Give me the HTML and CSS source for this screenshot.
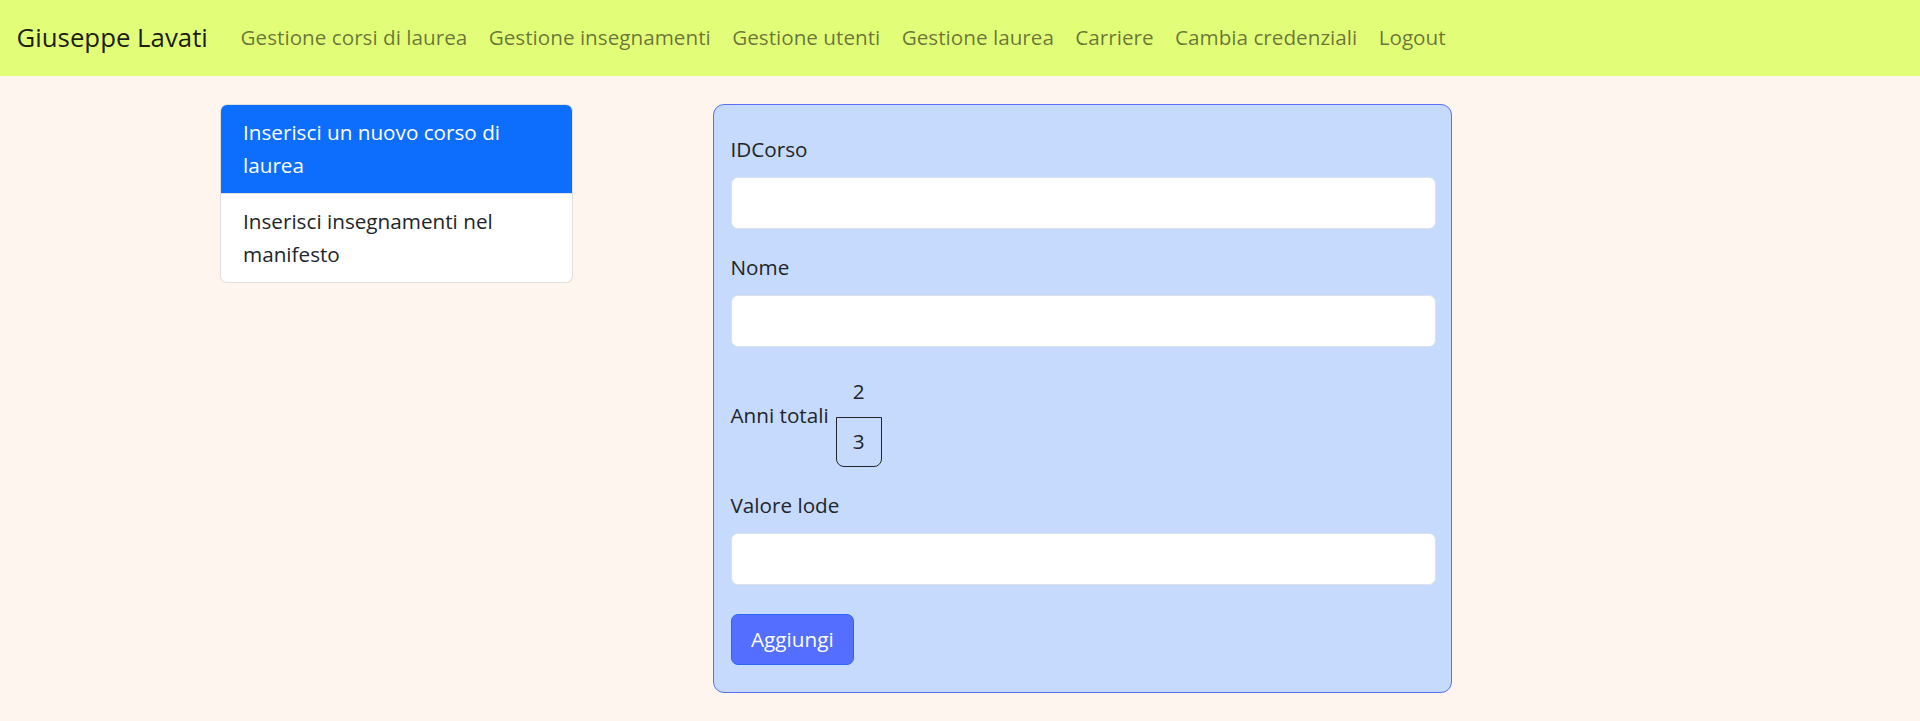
FILE: index.html
```html
<!DOCTYPE html>
<html lang="it">
<head>
<meta charset="utf-8">
<title>Gestione corsi di laurea</title>
<link rel="stylesheet" href="styles.css">
</head>
<body>
<nav class="navbar">
  <a class="brand" href="#">Giuseppe Lavati</a>
  <ul class="nav-links">
    <li><a class="nav-link" href="#">Gestione corsi di laurea</a></li>
    <li><a class="nav-link" href="#">Gestione insegnamenti</a></li>
    <li><a class="nav-link" href="#">Gestione utenti</a></li>
    <li><a class="nav-link" href="#">Gestione laurea</a></li>
    <li><a class="nav-link" href="#">Carriere</a></li>
    <li><a class="nav-link" href="#">Cambia credenziali</a></li>
    <li><a class="nav-link" href="#">Logout</a></li>
  </ul>
</nav>
<main class="page">
  <div class="list-group">
    <a class="list-item active" href="#">Inserisci un nuovo corso di laurea</a>
    <a class="list-item" href="#">Inserisci insegnamenti nel manifesto</a>
  </div>
  <form class="course-form">
    <div class="field">
      <label class="field-label" for="idcorso">IDCorso</label>
      <input class="control" id="idcorso" type="text">
    </div>
    <div class="field">
      <label class="field-label" for="nome">Nome</label>
      <input class="control" id="nome" type="text">
    </div>
    <div class="field field-inline">
      <label class="field-label inline-label">Anni totali</label>
      <div class="year-picker">
        <span class="year-option">2</span>
        <span class="year-box">3</span>
      </div>
    </div>
    <div class="field">
      <label class="field-label" for="lode">Valore lode</label>
      <input class="control" id="lode" type="text">
    </div>
    <button class="btn-primary" type="button">Aggiungi</button>
  </form>
</main>
</body>
</html>
```
FILE: styles.css
```css
* { box-sizing: border-box; }

html, body {
  margin: 0;
  padding: 0;
}

body {
  background: #fff5ef;
  font-family: "Open Sans", "Noto Sans", sans-serif;
  font-size: 20.7px;
  line-height: 33px;
  color: #212529;
  min-height: 721px;
}

a { text-decoration: none; }

/* Navbar */
.navbar {
  background: #e2fd77;
  display: flex;
  align-items: center;
  padding: 10px 16.5px;
  height: 75.5px;
}

.brand {
  font-size: 25.8px;
  line-height: 41px;
  color: rgba(0, 0, 0, 0.9);
  margin-right: 22px;
  white-space: nowrap;
}

.nav-links {
  display: flex;
  list-style: none;
  margin: 0;
  padding: 0;
}

.nav-link {
  display: block;
  padding: 11px 10.7px;
  color: rgba(0, 0, 0, 0.55);
  white-space: nowrap;
}

/* Page */
.page {
  display: flex;
  align-items: flex-start;
  padding: 28.5px 0 0 220px;
  gap: 140px;
}

.list-group {
  width: 353px;
  display: flex;
  flex-direction: column;
  border: 1px solid rgba(0, 0, 0, 0.125);
  border-radius: 7px;
  overflow: hidden;
  background: #fff;
}

.list-item {
  display: block;
  padding: 11px 22px;
  color: #212529;
}

.list-item + .list-item {
  border-top: 1px solid rgba(0, 0, 0, 0.125);
}

.list-item.active {
  background: #0d6efd;
  color: #fff;
  margin: -1px -1px 0;
  padding: 12px 23px 11px;
  border-radius: 7px 7px 0 0;
}

/* Form */
.course-form {
  width: 739px;
  background: #c6dafe;
  border: 1px solid #5b6ff2;
  border-radius: 11px;
  padding: 27.5px 15px 27px 16.5px;
}

.field {
  margin-bottom: 22px;
}

.field-label {
  display: block;
  margin-bottom: 11px;
}

.control {
  display: block;
  width: 100%;
  height: 52px;
  background: #fff;
  border: 1px solid #dee2e6;
  border-radius: 7px;
  font: inherit;
  padding: 0 16.5px;
}

.field-inline {
  display: flex;
  align-items: flex-start;
  gap: 7px;
}

.inline-label {
  margin: 30px 0 0;
}

.year-picker {
  display: flex;
  flex-direction: column;
  align-items: center;
  margin-top: 6.5px;
}

.year-option {
  display: block;
  line-height: 33px;
}

.year-box {
  display: block;
  width: 46px;
  height: 50px;
  margin-top: 8.5px;
  border: 1px solid #212529;
  border-radius: 0 0 8px 8px;
  text-align: center;
  padding-top: 7.5px;
  line-height: 33px;
}

.btn-primary {
  display: block;
  margin-top: 29px;
  height: 51px;
  padding: 0 19.5px;
  font: inherit;
  color: #fff;
  background: #546eff;
  border: 1px solid #2d66f6;
  border-radius: 7px;
}
```
